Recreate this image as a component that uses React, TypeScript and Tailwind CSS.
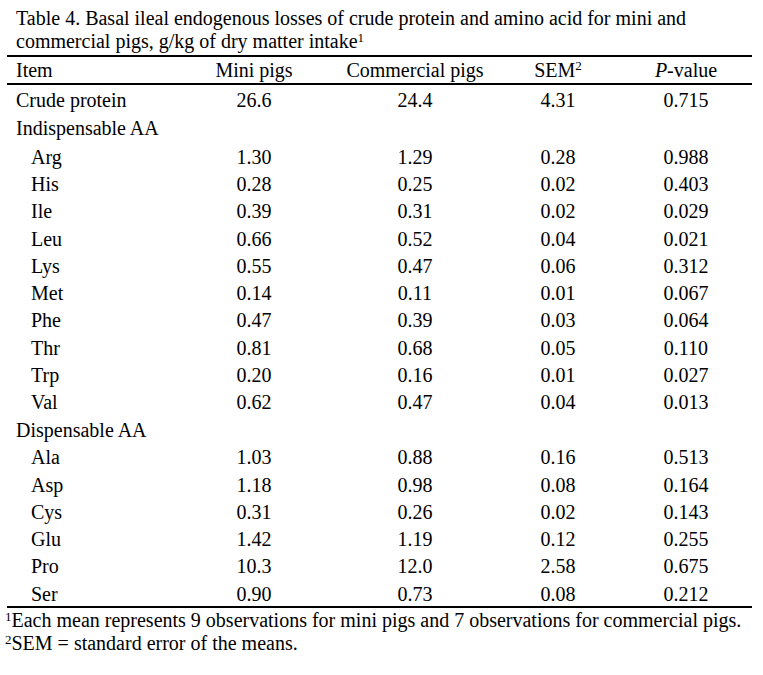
const indispensable = [
  ["Arg", "1.30", "1.29", "0.28", "0.988"],
  ["His", "0.28", "0.25", "0.02", "0.403"],
  ["Ile", "0.39", "0.31", "0.02", "0.029"],
  ["Leu", "0.66", "0.52", "0.04", "0.021"],
  ["Lys", "0.55", "0.47", "0.06", "0.312"],
  ["Met", "0.14", "0.11", "0.01", "0.067"],
  ["Phe", "0.47", "0.39", "0.03", "0.064"],
  ["Thr", "0.81", "0.68", "0.05", "0.110"],
  ["Trp", "0.20", "0.16", "0.01", "0.027"],
  ["Val", "0.62", "0.47", "0.04", "0.013"],
];

const dispensable = [
  ["Ala", "1.03", "0.88", "0.16", "0.513"],
  ["Asp", "1.18", "0.98", "0.08", "0.164"],
  ["Cys", "0.31", "0.26", "0.02", "0.143"],
  ["Glu", "1.42", "1.19", "0.12", "0.255"],
  ["Pro", "10.3", "12.0", "2.58", "0.675"],
  ["Ser", "0.90", "0.73", "0.08", "0.212"],
];

const cols = "grid grid-cols-[167px_160px_162px_124px_132px] items-center";

type Cell = React.ReactNode;

const Row = ({
  cells,
  indent = false,
  h = "h-[27.3px]",
  pad = "",
}: {
  cells: Cell[];
  indent?: boolean;
  h?: string;
  pad?: string;
}) => (
  <div className={`${cols} ${h}`}>
    <div className={`${indent ? "pl-[24px]" : "pl-[9px]"} ${pad}`}>{cells[0]}</div>
    <div className={`text-center ${pad}`}>{cells[1]}</div>
    <div className={`text-center ${pad}`}>{cells[2]}</div>
    <div className={`text-center ${pad}`}>{cells[3]}</div>
    <div className={`text-center ${pad}`}>{cells[4]}</div>
  </div>
);

export default function App() {
  return (
    <div
      className="w-[763px] h-[675px] bg-white text-black text-[20px] leading-[23px]"
      style={{ fontFamily: '"Liberation Serif", "Times New Roman", serif' }}
    >
      {/* Caption */}
      <div className="pt-[7px] pb-[2px] pl-[16px]">
        <p>Table 4. Basal ileal endogenous losses of crude protein and amino acid for mini and</p>
        <p>
          commercial pigs, g/kg of dry matter intake<sup className="text-[13px]">1</sup>
        </p>
      </div>

      {/* Table */}
      <div className="ml-[7px] w-[745px]">
        <div className="h-[2px] bg-black" />
        <Row
          cells={[
            "Item",
            "Mini pigs",
            "Commercial pigs",
            <>
              SEM<sup className="text-[13px]">2</sup>
            </>,
            <>
              <i>P</i>-value
            </>,
          ]}
          h="h-[26px]"
        />
        <div className="h-[2px] bg-black" />
        <Row cells={["Crude protein", "26.6", "24.4", "4.31", "0.715"]} h="h-[30px]" />
        <Row cells={["Indispensable AA", "", "", "", ""]} h="h-[27px]" />
        {indispensable.map((r) => (
          <Row key={r[0]} cells={r} indent pad="pt-[3px]" />
        ))}
        <Row cells={["Dispensable AA", "", "", "", ""]} h="h-[27.6px]" pad="pt-[3px]" />
        {dispensable.map((r) => (
          <Row key={r[0]} cells={r} indent pad="pt-[3px]" />
        ))}
        <div className="h-[2px] bg-black" />
      </div>

      {/* Footnotes */}
      <div className="pl-[5px] pt-[1px]">
        <p>
          <sup className="text-[13px]">1</sup>Each mean represents 9 observations for mini pigs and 7 observations for commercial pigs.
        </p>
        <p>
          <sup className="text-[13px]">2</sup>SEM = standard error of the means.
        </p>
      </div>
    </div>
  );
}
